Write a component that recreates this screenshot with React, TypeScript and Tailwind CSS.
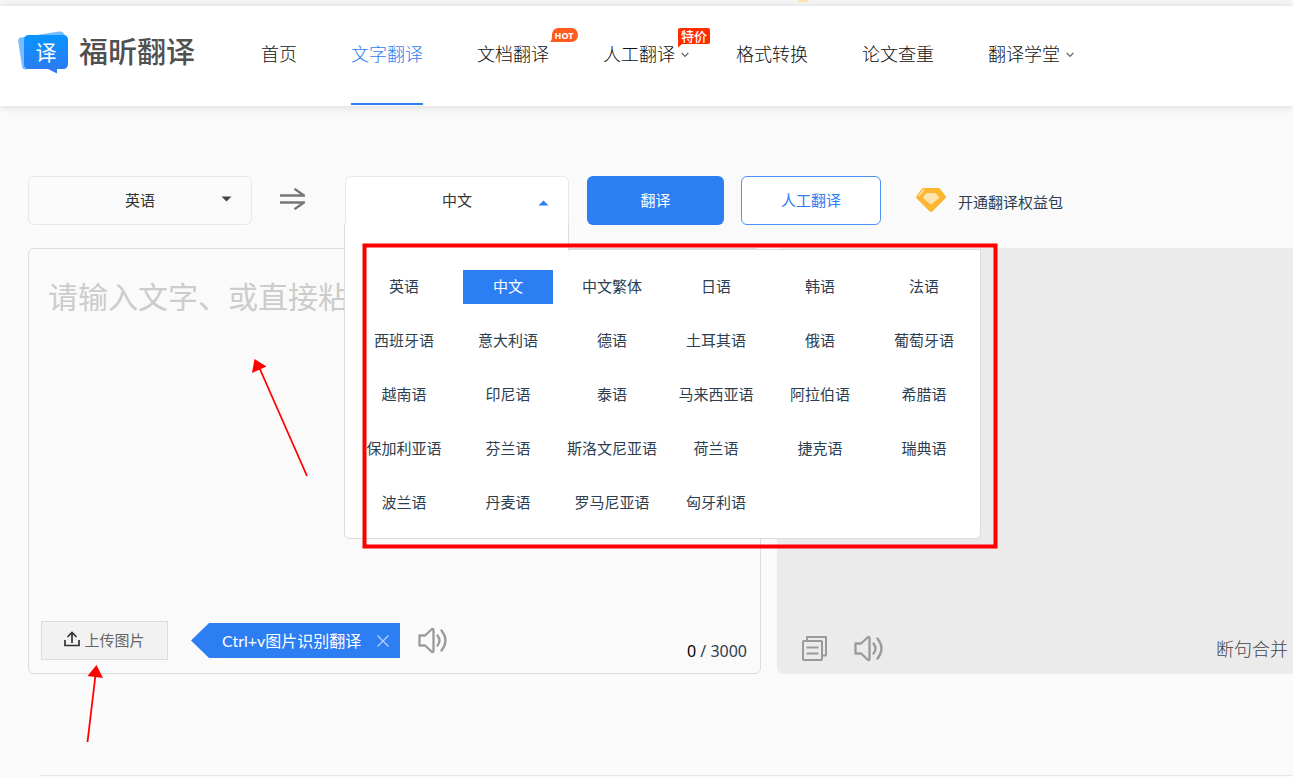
import React, { useState } from 'react';
import clsx from 'clsx';

const navItems = [
  { label: '首页' },
  { label: '文字翻译', active: true },
  { label: '文档翻译', badge: 'hot' },
  { label: '人工翻译', badge: 'sale', arrow: true },
  { label: '格式转换' },
  { label: '论文查重' },
  { label: '翻译学堂', arrow: true },
];

const languages = [
  '英语', '中文', '中文繁体', '日语', '韩语', '法语',
  '西班牙语', '意大利语', '德语', '土耳其语', '俄语', '葡萄牙语',
  '越南语', '印尼语', '泰语', '马来西亚语', '阿拉伯语', '希腊语',
  '保加利亚语', '芬兰语', '斯洛文尼亚语', '荷兰语', '捷克语', '瑞典语',
  '波兰语', '丹麦语', '罗马尼亚语', '匈牙利语',
];

export default function App() {
  const [text, setText] = useState('');
  const [source, setSource] = useState('英语');
  const [target, setTarget] = useState('中文');
  const [open, setOpen] = useState(true);
  const [showTip, setShowTip] = useState(true);

  return (
    <div className="relative min-h-screen overflow-hidden bg-[#fafafa] font-['Noto_Sans','Noto_Sans_CJK_SC',sans-serif] text-[#2c3e50]">
      <div className="flex h-1.5 justify-center overflow-hidden bg-[#f7f7f7]">
        <span className="ml-[312px] h-0.5 w-3 rounded-b-full bg-[#fde3b8]"></span>
      </div>

      <Header />

      <main className="pl-7">
        {/* Toolbar */}
        <div className="mt-[70px] flex h-[49px] items-center">
          <div className="relative h-full w-56">
            <select
              aria-label="源语言"
              value={source}
              onChange={e => setSource(e.target.value)}
              className="h-full w-full appearance-none rounded-md border border-[#e8e8e8] bg-[#fafafa] text-center text-[15px] text-[#333] [text-align-last:center]"
            >
              {languages.map(l => <option key={l}>{l}</option>)}
            </select>
            <svg className="pointer-events-none absolute right-5 top-5 h-[6px] w-[11px]" viewBox="0 0 11 6" fill="#444">
              <path d="M0.5 0.5h10L5.5 5.5z" />
            </svg>
          </div>

          <button type="button" aria-label="交换语言" className="mb-1 ml-7 mr-10">
            <SwapIcon />
          </button>

          <div className="relative z-10 h-full w-56">
            <button
              type="button"
              aria-haspopup="listbox"
              aria-expanded={open}
              onClick={() => setOpen(!open)}
              className="h-full w-full rounded-t-md border border-b-0 border-[#e8e8e8] bg-white pb-0.5 text-[15px] text-[#333]"
            >
              {target}
              <svg className="absolute right-5 top-6 h-[6px] w-[11px]" viewBox="0 0 11 6" fill="#2d7df3">
                <path d="M0.5 5.5h10L5.5 0.5z" />
              </svg>
            </button>
            {open && (
              <div className="absolute -left-px top-[47px]">
                <div className="relative z-10 h-7 w-[225px] border-x border-[#dcdcdc] bg-white"></div>
                <div
                  role="listbox"
                  aria-label="目标语言"
                  className="-mt-0.5 grid w-[637px] grid-cols-[repeat(6,90px)] gap-x-3.5 gap-y-5 rounded-b-md border border-[#dcdcdc] bg-white pb-[18px] pl-3.5 pt-5"
                >
                  {languages.map(l => (
                    <button
                      key={l}
                      type="button"
                      role="option"
                      aria-selected={l === target}
                      onClick={() => setTarget(l)}
                      className={clsx(
                        'flex h-[34px] items-center justify-center whitespace-nowrap pb-0.5 text-[15px]',
                        l === target ? 'bg-[#2d7df3] text-white' : 'text-[#2c3e50]'
                      )}
                    >
                      {l}
                    </button>
                  ))}
                </div>
              </div>
            )}
          </div>

          <button type="button" className="ml-[18px] h-full w-[137px] rounded-md bg-[#2d7df3] text-[15px] text-white">
            翻译
          </button>
          <button type="button" className="ml-[17px] h-full w-[140px] rounded-md border border-[#4d92f5] bg-white text-[15px] text-[#2d7df3]">
            人工翻译
          </button>
          <a href="#vip" className="ml-[35px] flex items-center gap-3 text-[15px]">
            <DiamondIcon />
            <span className="pt-1">开通翻译权益包</span>
          </a>
        </div>

        {/* Editor panels */}
        <div className="mt-[23px] grid grid-cols-[733fr_516fr] gap-4">
          <section className="flex flex-col rounded-md border border-[#dcdcdc]">
            <textarea
              aria-label="原文"
              value={text}
              onChange={e => setText(e.target.value)}
              placeholder="请输入文字、或直接粘贴"
              className="h-[372px] w-full resize-none px-[19px] pt-7 text-[30px] leading-10 outline-none placeholder:text-[#ccc]"
            />
            <div className="flex items-center pb-[13px] pl-3 pr-[13px]">
              <button type="button" className="flex h-[39px] w-[127px] items-center justify-center gap-1 border border-[#dcdcdc] bg-[#f2f2f2] text-[15px] text-[#666]">
                <UploadIcon />
                上传图片
              </button>
              {showTip && (
                <div className="ml-[23px] flex h-[35px] w-[209px] items-center justify-between bg-[#2d7df3] pl-[31px] pr-[11px] text-base text-white [clip-path:polygon(18px_0,100%_0,100%_100%,18px_100%,0_50%)]">
                  <span className="whitespace-nowrap font-['Lato','Noto_Sans_CJK_SC',sans-serif]">Ctrl+v图片识别翻译</span>
                  <button type="button" aria-label="关闭" onClick={() => setShowTip(false)}>
                    <svg className="h-3 w-3" viewBox="0 0 12 12" stroke="#b9d4fb" strokeWidth="1.2">
                      <path d="M0.5 0.5l11 11M11.5 0.5l-11 11" />
                    </svg>
                  </button>
                </div>
              )}
              <button type="button" aria-label="朗读原文" className="ml-[18px]">
                <SpeakerIcon />
              </button>
              <p className="ml-auto self-end text-base leading-[18px]">
                <span className="text-black">{text.length}</span> / 3000
              </p>
            </div>
          </section>

          <section className="flex flex-col justify-end rounded-l-md bg-[#ebebeb]">
            <div className="mb-[13px] flex h-[26px] items-center pl-[25px] pr-[5px]">
              <button type="button" aria-label="复制译文">
                <CopyIcon />
              </button>
              <button type="button" aria-label="朗读译文" className="ml-[27px]">
                <SpeakerIcon />
              </button>
              <button type="button" className="ml-auto pt-0.5 text-lg font-light text-[#444]">断句合并</button>
            </div>
          </section>
        </div>

        <hr className="ml-3 mt-[101px] border-[#e8e8e8]" />
      </main>

      <Annotations />
    </div>
  );
}

function Header() {
  return (
    <header className="flex h-[100px] bg-white pl-[18px] shadow-[0_1px_8px_rgba(0,0,0,0.14)]">
      <a href="#home" className="mt-[25px] flex h-[43px] items-center gap-2.5">
        <LogoIcon />
        <span className="pb-0.5 text-[29px] font-medium leading-none text-[#505050]">福昕翻译</span>
      </a>
      <nav className="ml-[66px] flex gap-[54px]">
        {navItems.map(item => (
          <a
            key={item.label}
            href="#"
            className={clsx(
              'relative flex h-[99px] items-center whitespace-nowrap border-b-2 pb-0.5 text-lg font-light',
              item.active ? 'border-[#2d7df3] text-[#2d7df3]' : 'border-transparent text-[#111]',
              item.badge === 'sale' && 'pr-[7px]'
            )}
          >
            {item.label}
            {item.arrow && (
              <svg className="absolute left-[78px] top-[46px] h-[6px] w-2" viewBox="0 0 8 6" fill="none" stroke="#666" strokeWidth="1.2">
                <path d="M0.7 1L4 4.5 7.3 1" />
              </svg>
            )}
            {item.badge === 'hot' && <HotBadge />}
            {item.badge === 'sale' && <SaleBadge />}
          </a>
        ))}
      </nav>
    </header>
  );
}

function HotBadge() {
  return (
    <span className="absolute left-[73px] top-[22px] flex h-3.5 w-7 items-center justify-center text-[9px] font-bold leading-none text-white">
      <svg className="absolute inset-0 h-full w-full" viewBox="0 0 28 14" fill="#ff5a1f">
        <path d="M8.500 0H21.500A6.500 7 0 0 1 21.500 14H0C1.500 12.500 2 11 2 7.500 2 3 4.500 0 8.500 0z" />
      </svg>
      <span className="relative">HOT</span>
    </span>
  );
}

function SaleBadge() {
  return (
    <span className="absolute left-[75px] top-[22px] flex h-4 w-8 items-center justify-center text-[13px] font-medium leading-none text-white">
      <svg className="absolute left-0 top-0 h-5 w-8" viewBox="0 0 32 20" fill="#ff2c00">
        <path d="M2 0h28a2 2 0 0 1 2 2v12a2 2 0 0 1-2 2H4L0 19.500V2a2 2 0 0 1 2-2z" />
      </svg>
      <span className="relative">特价</span>
    </span>
  );
}

function LogoIcon() {
  return (
    <svg className="h-[43px] w-[51px]" viewBox="0 0 51 43">
      <defs>
        <linearGradient id="logo" x1="0" y1="0" x2="0" y2="1">
          <stop offset="0" stopColor="#0894ff" />
          <stop offset="1" stopColor="#2f78f0" />
        </linearGradient>
      </defs>
      <path d="M3 6.500L41 0.500q4-0.600 5.500 3L40 34 7 38.500q-2.500 0-3-3L0.200 10q-0.300-3 2.800-3.500z" fill="#76bcff" />
      <path d="M11 4h34q5 0 5 5v24q0 5-5 5h-6v4.500L30 38H11q-5 0-5-5V9q0-5 5-5z" fill="url(#logo)" />
      <text x="28" y="29" textAnchor="middle" fontSize="21" fill="#fff" fontFamily="Noto Sans CJK SC, sans-serif">译</text>
    </svg>
  );
}

function SwapIcon() {
  return (
    <svg className="h-[22px] w-[25px]" viewBox="0 0 25 22" fill="none" stroke="#777" strokeWidth="2.4">
      <path d="M0 7.500h24L14.500 0.800M0 14.500h24L14.500 21.200" />
    </svg>
  );
}

function DiamondIcon() {
  return (
    <svg className="mb-0.5 h-6 w-[30px]" viewBox="0 0 30 24">
      <path d="M7.500 0h15q1 0 1.700 0.800L29.500 8q0.900 1.200-0.200 2.400L16.500 23.300q-1.500 1.400-3 0L0.700 10.400Q-0.400 9.200 0.500 8l5.300-7.200Q6.500 0 7.500 0z" fill="#fdb62f" />
      <path d="M11.500 5h7q1 0 1.700 0.800L23 9q0.400 0.700-0.200 1.300L16 16q-1 0.800-2 0L7.200 10.300Q6.600 9.700 7 9l2.800-3.200Q10.500 5 11.500 5z" fill="#ffe2ae" />
      <path d="M3 7.500l4.800-5.700" stroke="#ffe2ae" strokeWidth="1.500" strokeLinecap="round" />
    </svg>
  );
}

function UploadIcon() {
  return (
    <svg className="mb-1 h-4 w-4" viewBox="0 0 16 16" fill="none" stroke="#333" strokeWidth="1.700">
      <path d="M1 9v5.500h14V9M8 12V2M3.500 6L8 1.500 12.500 6" />
    </svg>
  );
}

function SpeakerIcon() {
  return (
    <svg className="h-[27px] w-[29px]" viewBox="0 0 29 27" fill="none" stroke="#9a9a9a" strokeWidth="2.300" strokeLinejoin="round" strokeLinecap="round">
      <path d="M1.500 8.500h5.500l6.500-6q2-1.500 2 0.800v20.400q0 2.300-2 0.800l-6.500-6H1.500z" />
      <path d="M19.500 8.500q4 5 0 10M23.500 3.500q8 10 0 20" />
    </svg>
  );
}

function CopyIcon() {
  return (
    <svg className="h-[25px] w-[25px]" viewBox="0 0 25 25" fill="none" stroke="#9a9a9a" strokeWidth="2" strokeLinejoin="round">
      <rect x="1" y="5" width="19" height="19" rx="1" />
      <path d="M5 4.500V1h19v18.500h-3.500M4.500 11.500h12M4.500 17.500h12" />
    </svg>
  );
}

/* Red guide marks drawn over the page */
function Annotations() {
  return (
    <svg className="pointer-events-none absolute left-0 top-0 z-20 h-[777px] w-[1293px]" viewBox="0 0 1293 777" fill="none" stroke="#f00">
      <rect x="364.500" y="245.500" width="631" height="301" strokeWidth="4" />
      <path d="M307 476L259 367M87.500 742L95.500 675" strokeWidth="1.800" />
      <path d="M254.500 359L266.500 366.500 252 373zM96.500 665L103 678 87.500 676z" fill="#f00" stroke="none" />
    </svg>
  );
}
